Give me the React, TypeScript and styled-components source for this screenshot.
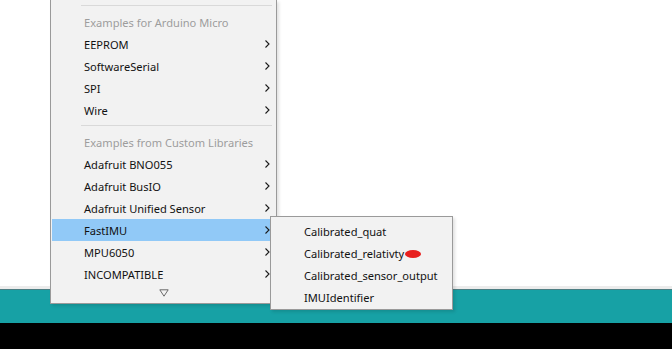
import React from "react";
import styled, { createGlobalStyle } from "styled-components";

const GlobalStyle = createGlobalStyle`
  html, body {
    margin: 0;
    padding: 0;
    width: 672px;
    height: 349px;
    overflow: hidden;
    background: #ffffff;
  }
  body {
    font-family: "Noto Sans", "Liberation Sans", sans-serif;
  }
`;

type Item = { label: string; kind: "item" | "header" | "sep"; sub?: boolean; active?: boolean };

const mainItems: Item[] = [
  { label: "", kind: "sep" },
  { label: "Examples for Arduino Micro", kind: "header" },
  { label: "EEPROM", kind: "item", sub: true },
  { label: "SoftwareSerial", kind: "item", sub: true },
  { label: "SPI", kind: "item", sub: true },
  { label: "Wire", kind: "item", sub: true },
  { label: "", kind: "sep" },
  { label: "Examples from Custom Libraries", kind: "header" },
  { label: "Adafruit BNO055", kind: "item", sub: true },
  { label: "Adafruit BusIO", kind: "item", sub: true },
  { label: "Adafruit Unified Sensor", kind: "item", sub: true },
  { label: "FastIMU", kind: "item", sub: true, active: true },
  { label: "MPU6050", kind: "item", sub: true },
  { label: "INCOMPATIBLE", kind: "item", sub: true },
];

const subItems = [
  "Calibrated_quat",
  "Calibrated_relativty",
  "Calibrated_sensor_output",
  "IMUIdentifier",
];

function Chevron() {
  return (
    <svg width="5" height="8" viewBox="0 0 5 8">
      <polyline points="0.5,0.5 4,4 0.5,7.5" fill="none" stroke="#1a1a1a" strokeWidth="1.1" />
    </svg>
  );
}

function ScrollArrow() {
  return (
    <svg width="10" height="8" viewBox="0 0 10 8">
      <polygon points="0.8,0.8 9.2,0.8 5,7.2" fill="none" stroke="#6a6a6a" strokeWidth="1" />
    </svg>
  );
}

export default function App() {
  return (
    <>
      <GlobalStyle />
      <Page>
        <Editor />
        <Divider />
        <StatusBar />
        <Console />

        <MainMenu>
          {mainItems.map((it, i) =>
            it.kind === "sep" ? (
              <Separator key={i} />
            ) : (
              <Row key={i} $active={it.active} $header={it.kind === "header"}>
                <span>{it.label}</span>
                {it.sub && <Chevron />}
              </Row>
            )
          )}
          <ScrollRow>
            <ScrollArrow />
          </ScrollRow>
        </MainMenu>

        <SubMenu>
          {subItems.map((s) => (
            <SubRow key={s}>
              {s}
              {s === "Calibrated_relativty" && <Blob />}
            </SubRow>
          ))}
        </SubMenu>
      </Page>
    </>
  );
}

const Page = styled.div`
  position: relative;
  width: 672px;
  height: 349px;
  display: flex;
  flex-direction: column;
`;

const Editor = styled.div`
  height: 286px;
  background: #ffffff;
`;

const Divider = styled.div`
  height: 3px;
  background: #ececec;
  border-bottom: 1px solid #4d7e83;
`;

const StatusBar = styled.div`
  height: 33px;
  background: #17a1a5;
`;

const Console = styled.div`
  flex: 1;
  background: #000000;
`;

const MainMenu = styled.div`
  position: absolute;
  left: 50px;
  top: 0;
  width: 225px;
  padding: 1px 0 1px;
  background: #f2f2f2;
  border: 1px solid #9a9a9a;
  border-top: none;
  box-shadow: 2px 2px 3px rgba(0, 0, 0, 0.12);
  display: flex;
  flex-direction: column;
`;

const Separator = styled.div`
  height: 10px;
  display: flex;
  align-items: center;
  padding: 0 4px 0 30px;
  &::after {
    content: "";
    flex: 1;
    height: 1px;
    background: #d9d9d9;
    margin-top: -1px;
  }
`;

const Row = styled.div<{ $active?: boolean; $header?: boolean }>`
  height: 22px;
  margin: 0 1px;
  padding: 0 5px 0 32px;
  display: flex;
  align-items: center;
  justify-content: space-between;
  font-size: 11.1px;
  color: ${(p) => (p.$header ? "#9d9d9d" : "#111111")};
  background: ${(p) => (p.$active ? "#91c9f7" : "transparent")};
  white-space: nowrap;
`;

const ScrollRow = styled.div`
  height: 16px;
  display: flex;
  align-items: center;
  justify-content: center;
  padding-bottom: 1px;
`;

const SubMenu = styled.div`
  position: absolute;
  left: 270px;
  top: 216px;
  width: 181px;
  padding: 3px 0 1px;
  background: #f2f2f2;
  border: 1px solid #9a9a9a;
  box-shadow: 2px 2px 3px rgba(0, 0, 0, 0.12);
  display: flex;
  flex-direction: column;
`;

const SubRow = styled.div`
  position: relative;
  height: 22px;
  padding-left: 33px;
  display: flex;
  align-items: center;
  font-size: 11.1px;
  color: #111111;
  white-space: nowrap;
`;

const Blob = styled.span`
  display: inline-block;
  width: 16px;
  height: 8px;
  border-radius: 50%;
  background: #e8201f;
  margin-left: 1px;
  margin-top: 1px;
`;
